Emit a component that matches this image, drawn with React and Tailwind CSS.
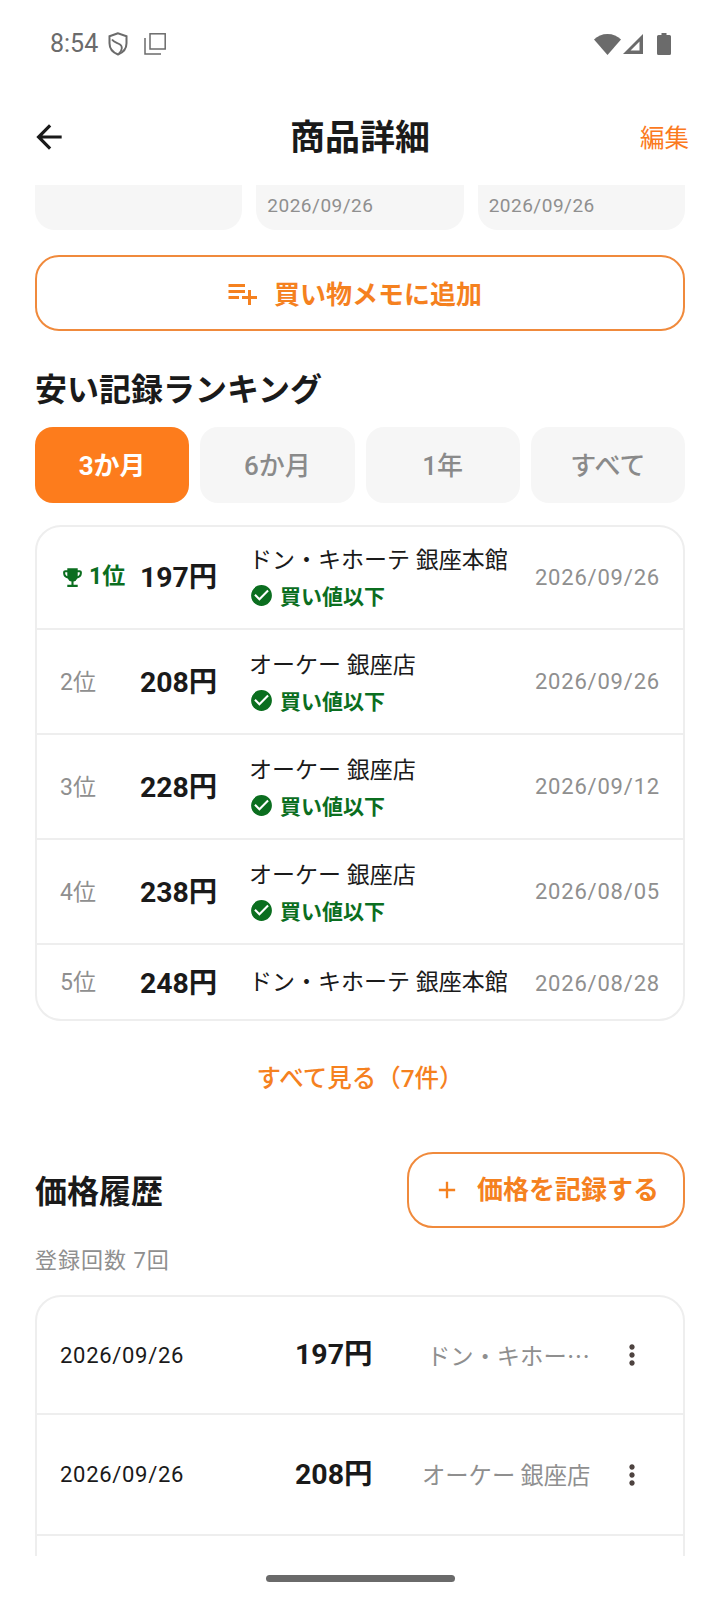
import { MdAdd, MdArrowBack, MdCheckCircle, MdEmojiEvents, MdMoreVert, MdPlaylistAdd } from "react-icons/md";

const rankings = [
  { rank: "2位", price: "208円", store: "オーケー 銀座店", date: "2026/09/26" },
  { rank: "3位", price: "228円", store: "オーケー 銀座店", date: "2026/09/12" },
  { rank: "4位", price: "238円", store: "オーケー 銀座店", date: "2026/08/05" },
];

const tabs = ["3か月", "6か月", "1年", "すべて"];

function BelowBuy() {
  return (
    <div className="mt-[7px] flex h-[26px] items-center gap-[6px] text-[21px] leading-[26px] font-bold text-[#0b6e1f]">
      <MdCheckCircle className="-mt-[3px] h-[25px] w-[25px] shrink-0" />
      <span>買い値以下</span>
    </div>
  );
}

function RankRow({ rank, price, store, date }) {
  return (
    <div className="flex h-[105px] items-center border-b-2 border-[#eeeeee] px-[23px]">
      <span className="w-[80px] pt-[3px] text-[23px] text-[#8f8f8f]">{rank}</span>
      <span className="w-[109px] pt-[2px] text-[28.4px] leading-[34px] font-bold whitespace-nowrap text-[#1a1a1a]">{price}</span>
      <div className="flex-1 pt-[2px]">
        <div className="h-[32px] text-[23px] leading-[32px] text-[#1a1a1a]">{store}</div>
        <BelowBuy />
      </div>
      <span className="text-[22px] tracking-[0.8px] text-[#8f8f8f]">{date}</span>
    </div>
  );
}

function HistoryRow({ date, price, store, height }) {
  return (
    <div className={`flex items-center border-b-2 border-[#eeeeee] pr-[35px] pl-[23px] ${height}`}>
      <span className="w-[235px] text-[22px] tracking-[0.7px] text-[#1a1a1a]">{date}</span>
      <span className="w-[127px] text-[28.5px] leading-[34px] font-bold text-[#1a1a1a]">{price}</span>
      <span className="w-[168px] text-right font-['Noto_Sans_CJK_JP'] text-[23.3px] whitespace-nowrap text-[#8f8f8f]">{store}</span>
      <MdMoreVert className="ml-[26px] h-[32px] w-[32px] text-[#4e4340]" />
    </div>
  );
}

export default function App() {
  return (
    <div
      className="flex h-[1600px] w-[720px] flex-col overflow-hidden bg-white"
      style={{ fontFamily: 'Roboto, "Noto Sans CJK JP", sans-serif' }}
    >
      {/* status bar */}
      <div className="flex h-[88px] shrink-0 items-center justify-between pr-[49px] pl-[50px] text-[#6b6b6b]">
        <div className="flex items-center">
          <span className="text-[25px] leading-[30px]">8:54</span>
          <svg viewBox="0 0 20 24" className="ml-[10px] h-[24px] w-[20px]" fill="none" stroke="currentColor" strokeWidth="2">
            <path d="M10 1.200 1.500 4.200v7c0 5 3.500 9.300 8.500 11.300 5-2 8.500-6.300 8.500-11.300v-7z" />
            <path d="M4 7.500c2 3 5 3 8 5 3 2 2 6-1 9" strokeWidth="1.800" />
          </svg>
          <svg viewBox="0 0 22 22" className="ml-[16px] h-[22px] w-[22px]" fill="none" stroke="currentColor" strokeWidth="1.500">
            <rect x="6" y="0.800" width="15.200" height="15.200" />
            <path d="M1 5V21H17" />
          </svg>
        </div>
        <div className="flex items-center">
          <svg viewBox="0 0 27 21" className="h-[21px] w-[27px]" fill="currentColor">
            <path d="M13.500 21 0 5.500C3.500 2 8.200 0 13.500 0S23.500 2 27 5.500z" />
          </svg>
          <svg viewBox="0 0 20 20" className="ml-[2px] h-[20px] w-[20px]" fill="currentColor" fillRule="evenodd">
            <path d="M20 0 0 20H20zM16.500 7.500 7.500 16.500H16.500z" />
          </svg>
          <svg viewBox="0 0 14 22" className="ml-[14px] h-[22px] w-[14px]" fill="currentColor">
            <path d="M4.500 0h5v2h3A1.500 1.500 0 0 1 14 3.500v17a1.500 1.500 0 0 1-1.500 1.500h-11A1.500 1.500 0 0 1 0 20.500v-17A1.500 1.500 0 0 1 1.500 2h3z" />
          </svg>
        </div>
      </div>

      {/* header */}
      <div className="relative flex h-[97px] shrink-0 items-center justify-between pr-[31px] pl-[30px]">
        <MdArrowBack className="h-[38px] w-[38px] text-[#1a1a1a]" />
        <h1 className="absolute inset-x-0 pt-[4px] text-center text-[35px] leading-[44px] font-bold text-[#1a1a1a]">商品詳細</h1>
        <span className="pt-[4px] text-[24.5px] leading-[30px] text-[#fb7a1e]">編集</span>
      </div>

      {/* scroll area */}
      <div className="min-h-0 flex-1 overflow-hidden px-[35px]">
        <div className="grid h-[45px] grid-cols-3 gap-[14px]">
          <div className="rounded-b-[20px] bg-[#f6f6f6]" />
          <div className="rounded-b-[20px] bg-[#f6f6f6] px-[11px] pt-[9px] text-[19px] leading-[24px] tracking-[0.5px] text-[#8f8f8f]">2026/09/26</div>
          <div className="rounded-b-[20px] bg-[#f6f6f6] px-[11px] pt-[9px] text-[19px] leading-[24px] tracking-[0.5px] text-[#8f8f8f]">2026/09/26</div>
        </div>

        <button className="mt-[25px] flex h-[76px] w-full items-center justify-center gap-[14px] rounded-[24px] border-2 border-[#f08a3c] pr-[14px] text-[26px] font-bold text-[#f5811f]">
          <MdPlaylistAdd className="h-[36px] w-[36px]" />
          <span className="pt-[5px]">買い物メモに追加</span>
        </button>

        <h2 className="mt-[38px] text-[32px] leading-[42px] font-bold text-[#1a1a1a]">安い記録ランキング</h2>

        <div className="mt-[16px] grid h-[76px] grid-cols-4 gap-[11px]">
          {tabs.map((tab, i) => (
            <div
              key={tab}
              className={`flex items-center justify-center rounded-[18px] pt-[3px] text-[26px] ${
                i === 0 ? "bg-[#fd7c1c] font-bold text-white" : "bg-[#f6f6f6] font-medium text-[#8a8a8a]"
              }`}
            >
              {tab}
            </div>
          ))}
        </div>

        <div className="mt-[22px] h-[496px] overflow-hidden rounded-[26px] border-2 border-[#eeeeee]">
          <div className="flex h-[103px] items-center border-b-2 border-[#eeeeee] px-[23px]">
            <div className="flex w-[80px] items-center text-[23px] font-bold text-[#0b6e1f]">
              <MdEmojiEvents className="mr-[4px] h-[25px] w-[25px]" />
              <span>1位</span>
            </div>
            <span className="w-[109px] text-[28.4px] leading-[34px] font-bold whitespace-nowrap text-[#1a1a1a]">197円</span>
            <div className="flex-1 pb-[1px]">
              <div className="h-[32px] text-[23px] leading-[32px] text-[#1a1a1a]">ドン・キホーテ 銀座本館</div>
              <BelowBuy />
            </div>
            <span className="text-[22px] tracking-[0.8px] text-[#8f8f8f]">2026/09/26</span>
          </div>
          {rankings.map((row) => (
            <RankRow key={row.rank} {...row} />
          ))}
          <div className="flex h-[75px] items-center px-[23px] pt-[2px]">
            <span className="w-[80px] text-[23px] text-[#8f8f8f]">5位</span>
            <span className="w-[109px] text-[28.4px] leading-[34px] font-bold whitespace-nowrap text-[#1a1a1a]">248円</span>
            <span className="flex-1 text-[23px] text-[#1a1a1a]">ドン・キホーテ 銀座本館</span>
            <span className="text-[22px] tracking-[0.8px] text-[#8f8f8f]">2026/08/28</span>
          </div>
        </div>

        <div className="mt-[41px] text-center text-[24.5px] leading-[34px] font-medium text-[#f5811f]">すべて見る（7件）</div>

        <div className="mt-[56px] flex h-[76px] items-center justify-between">
          <h2 className="pt-[4px] text-[32px] leading-[42px] font-bold text-[#1a1a1a]">価格履歴</h2>
          <button className="flex h-[76px] w-[278px] items-center justify-center gap-[16px] rounded-[26px] border-2 border-[#f08a3c] text-[26px] font-bold text-[#f5811f]">
            <MdAdd className="h-[28px] w-[28px]" />
            <span>価格を記録する</span>
          </button>
        </div>

        <div className="mt-[18px] text-[22px] leading-[30px] tracking-[1px] text-[#8f8f8f]">登録回数 7回</div>

        <div className="mt-[19px] h-[300px] rounded-t-[26px] border-2 border-[#eeeeee]">
          <HistoryRow date="2026/09/26" price="197円" store="ドン・キホー…" height="h-[118px]" />
          <HistoryRow date="2026/09/26" price="208円" store="オーケー 銀座店" height="h-[121px]" />
        </div>
      </div>

      {/* gesture bar */}
      <div className="flex h-[44px] shrink-0 items-center justify-center">
        <div className="h-[7px] w-[189px] rounded-full bg-[#6a6a6a]" />
      </div>
    </div>
  );
}
